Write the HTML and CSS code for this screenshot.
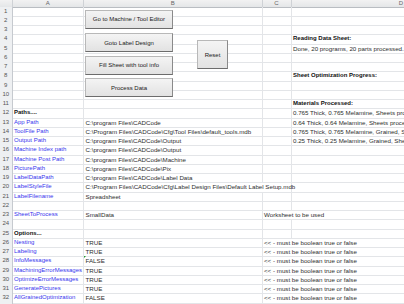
FILE: index.html
```html
<!DOCTYPE html>
<html lang="en">
<head>
    <meta charset="UTF-8">
    <title>CADCode Settings</title>
    <link rel="stylesheet" href="styles.css">
</head>
<body>
    <div class="sheet">
        <div class="row head">
            <div class="corner"></div>
            <div class="col">A</div>
            <div class="col">B</div>
            <div class="col">C</div>
            <div class="col">D</div>
        </div>

        <div class="row"><div class="num">1</div><div class="c"></div><div class="c"></div><div class="c"></div><div class="c"></div></div>
        <div class="row"><div class="num">2</div><div class="c"></div><div class="c"></div><div class="c"></div><div class="c"></div></div>
        <div class="row"><div class="num">3</div><div class="c"></div><div class="c"></div><div class="c"></div><div class="c"></div></div>
        <div class="row"><div class="num">4</div><div class="c"></div><div class="c"></div><div class="c"></div><div class="c bold">Reading Data Sheet:</div></div>
        <div class="row"><div class="num">5</div><div class="c"></div><div class="c"></div><div class="c"></div><div class="c">Done, 20 programs, 20 parts processed.</div></div>
        <div class="row"><div class="num">6</div><div class="c"></div><div class="c"></div><div class="c"></div><div class="c"></div></div>
        <div class="row"><div class="num">7</div><div class="c"></div><div class="c"></div><div class="c"></div><div class="c"></div></div>
        <div class="row"><div class="num">8</div><div class="c"></div><div class="c"></div><div class="c"></div><div class="c bold">Sheet Optimization Progress:</div></div>
        <div class="row"><div class="num">9</div><div class="c"></div><div class="c"></div><div class="c"></div><div class="c"></div></div>
        <div class="row"><div class="num">10</div><div class="c"></div><div class="c"></div><div class="c"></div><div class="c"></div></div>
        <div class="row"><div class="num">11</div><div class="c"></div><div class="c"></div><div class="c"></div><div class="c bold">Materials Processed:</div></div>
        <div class="row"><div class="num">12</div><div class="c bold">Paths....</div><div class="c"></div><div class="c"></div><div class="c">0.765 Thick, 0.765 Melamine, Sheets processed: 4</div></div>
        <div class="row"><div class="num">13</div><div class="c key">App Path</div><div class="c">C:\program Files\CADCode</div><div class="c"></div><div class="c">0.64 Thick, 0.64 Melamine, Sheets processed: 2</div></div>
        <div class="row"><div class="num">14</div><div class="c key">ToolFile Path</div><div class="c">C:\Program Files\CADCode\Cfg\Tool Files\default_tools.mdb</div><div class="c"></div><div class="c">0.765 Thick, 0.765 Melamine, Grained, Sheets processed: 1</div></div>
        <div class="row"><div class="num">15</div><div class="c key">Output Path</div><div class="c">C:\program Files\CADCode\Output</div><div class="c"></div><div class="c">0.25 Thick, 0.25 Melamine, Grained, Sheets processed: 1</div></div>
        <div class="row"><div class="num">16</div><div class="c key">Machine Index path</div><div class="c">C:\program Files\CADCode\Output</div><div class="c"></div><div class="c"></div></div>
        <div class="row"><div class="num">17</div><div class="c key">Machine Post Path</div><div class="c">C:\program Files\CADCode\Machine</div><div class="c"></div><div class="c"></div></div>
        <div class="row"><div class="num">18</div><div class="c key">PicturePath</div><div class="c">C:\program Files\CADCode\Pix</div><div class="c"></div><div class="c"></div></div>
        <div class="row"><div class="num">19</div><div class="c key">LabelDataPath</div><div class="c">C:\program Files\CADCode\Label Data</div><div class="c"></div><div class="c"></div></div>
        <div class="row"><div class="num">20</div><div class="c key">LabelStyleFile</div><div class="c span2">C:\Program Files\CADCode\Cfg\Label Design Files\Default Label Setup.mdb</div><div class="c"></div></div>
        <div class="row"><div class="num">21</div><div class="c key">LabelFilename</div><div class="c">Spreadsheet</div><div class="c"></div><div class="c"></div></div>
        <div class="row"><div class="num">22</div><div class="c"></div><div class="c"></div><div class="c"></div><div class="c"></div></div>
        <div class="row"><div class="num">23</div><div class="c key">SheetToProcess</div><div class="c">SmallData</div><div class="c span2">Worksheet to be used</div></div>
        <div class="row"><div class="num">24</div><div class="c"></div><div class="c"></div><div class="c"></div><div class="c"></div></div>
        <div class="row"><div class="num">25</div><div class="c bold">Options...</div><div class="c"></div><div class="c"></div><div class="c"></div></div>
        <div class="row"><div class="num">26</div><div class="c key">Nesting</div><div class="c">TRUE</div><div class="c span2">&lt;&lt; - must be boolean true or false</div></div>
        <div class="row"><div class="num">27</div><div class="c key">Labeling</div><div class="c">TRUE</div><div class="c span2">&lt;&lt; - must be boolean true or false</div></div>
        <div class="row"><div class="num">28</div><div class="c key">InfoMessages</div><div class="c flag">FALSE</div><div class="c span2">&lt;&lt; - must be boolean true or false</div></div>
        <div class="row"><div class="num">29</div><div class="c key">MachiningErrorMessages</div><div class="c">TRUE</div><div class="c span2">&lt;&lt; - must be boolean true or false</div></div>
        <div class="row"><div class="num">30</div><div class="c key">OptimizeErrorMessages</div><div class="c">TRUE</div><div class="c span2">&lt;&lt; - must be boolean true or false</div></div>
        <div class="row"><div class="num">31</div><div class="c key">GeneratePictures</div><div class="c">TRUE</div><div class="c span2">&lt;&lt; - must be boolean true or false</div></div>
        <div class="row"><div class="num">32</div><div class="c key">AllGrainedOptimization</div><div class="c">FALSE</div><div class="c span2">&lt;&lt; - must be boolean true or false</div></div>
        <div class="row"><div class="num">33</div><div class="c"></div><div class="c"></div><div class="c"></div><div class="c"></div></div>

        <!-- sheet buttons float over the cells -->
        <button class="btn b1">Go to Machine / Tool Editor</button>
        <button class="btn b2">Goto Label Design</button>
        <button class="btn b3">Fill Sheet with tool info</button>
        <button class="btn b4">Process Data</button>
        <button class="btn reset">Reset</button>
    </div>
</body>
</html>
```

FILE: styles.css
```css
body { margin: 0; overflow: hidden; background: #fff; font-family: "Liberation Sans", Arial, sans-serif; font-size: 6.2px; color: #2e2e2e; }
.sheet { position: relative; width: 404px; height: 304px; overflow: hidden; }
.row { display: grid; grid-template-columns: 12.5px 71.5px 178.5px 29px 220px; height: 9.25px; }
.row > div { box-sizing: border-box; border-right: 1px solid #e3e5e8; border-bottom: 1px solid #e3e5e8; white-space: nowrap; line-height: 9.25px; padding-left: 1.5px; overflow: visible; position: relative; }
.head { height: 6.5px; }
.head > div { background: linear-gradient(#f2f2f2, #e4e6e8); border-right: 1px solid #cfd2d6; border-bottom: 1px solid #b9bdc2; color: #666; text-align: center; line-height: 7px; padding: 0; font-size: 6px; }
.corner { background: #e8eaec; }
.num { background: #eef0f2; color: #555; text-align: center; font-size: 6px; padding-left: 0 !important; border-right: 1px solid #c6cacf !important; border-bottom: 1px solid #d6d9dd !important; }
.bold { font-weight: bold; color: #111; font-size: 6px; }
.key { color: #3636ee; font-size: 6px; }
.span2 { grid-column: span 2; }
.flag::before { content: ""; position: absolute; left: 0; top: 0; border-top: 2.5px solid #1f9a2f; border-right: 2.5px solid transparent; }
.btn { position: absolute; left: 85px; width: 88px; height: 19px; padding: 0; font-family: "Liberation Sans", Arial, sans-serif; font-size: 6px; color: #222; background: linear-gradient(#f4f4f4, #e2e2e2); border: 1px solid #b8b8b8; border-bottom: 1.5px solid #6c6c6c; border-right: 1px solid #8a8a8a; border-radius: 0; }
.b1 { top: 9.5px; }
.b2 { top: 33px; }
.b3 { top: 55.5px; }
.b4 { top: 78px; }
.reset { left: 197px; top: 40px; width: 31px; height: 29px; }
```
